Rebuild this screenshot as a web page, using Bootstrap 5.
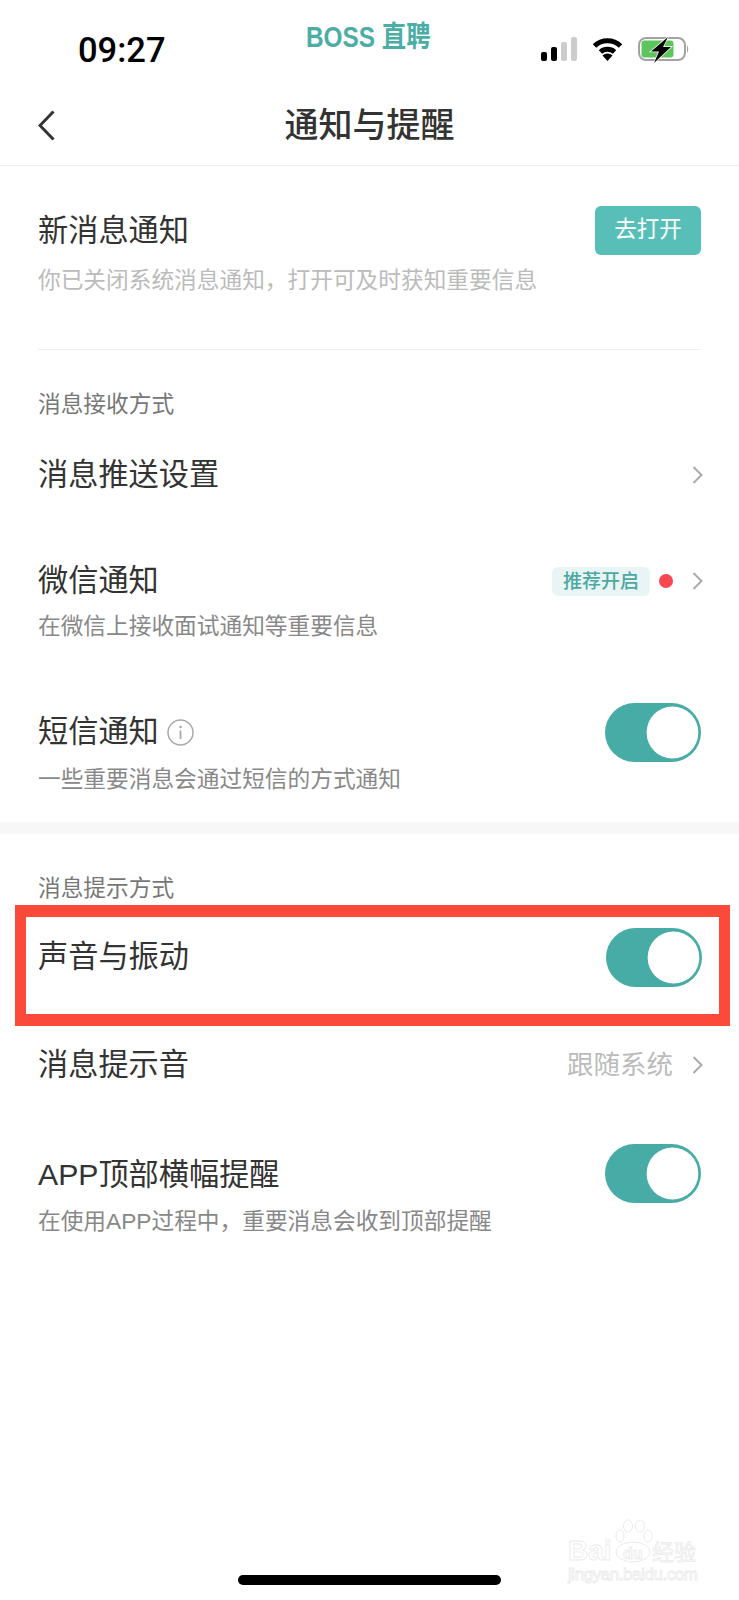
<!DOCTYPE html>
<html lang="zh-CN">
<head>
    <meta charset="UTF-8">
    <meta name="viewport" content="width=device-width, initial-scale=1.0">
    <title>通知与提醒</title>
    <link rel="stylesheet" href="https://cdn.jsdelivr.net/npm/bootstrap@5.3.0/dist/css/bootstrap.min.css">
    <style>
        body {
            width: 739px;
            height: 1600px;
            overflow: hidden;
            position: relative;
            background: #fff;
            font-family: "Liberation Sans", "Noto Sans CJK SC", sans-serif;
            color: #333;
        }
        .status-top { height: 90px; }
        .clock {
            width: 306px;
            padding: 34px 0 0 78px;
            font: 500 34.500px/32px Roboto, "Liberation Sans", sans-serif;
            color: #000;
        }
        .brand {
            width: 235px;
            padding-top: 21px;
            font-size: 29px;
            line-height: 32px;
            font-weight: 700;
            color: #4cada6;
            white-space: nowrap;
        }
        .brand span { display: inline-block; transform: scaleX(.84); transform-origin: left center; }
        .status-icons { padding-top: 37px; gap: 15px; }
        .sig-bar { width: 6px; border-radius: 2px; background: #000; }
        .sig-off { background: #ccc; }
        .sig-wrap { gap: 4px; height: 24px; }
        .top-nav {
            height: 76px;
            padding: 0 38px 6px;
            border-bottom: 1px solid #eee;
        }
        .top-nav h1 {
            font-size: 34px;
            line-height: 40px;
            font-weight: 500;
            color: #333;
            margin: 0;
        }
        .back-btn { left: 38px; top: 20px; }
        .head-line {
            height: 40px;
            font-size: 30.200px;
            line-height: 40px;
            color: #333;
        }
        .sub-text {
            font-size: 22.700px;
            line-height: 30px;
            color: #888;
        }
        .sub-pale { color: #bbb; }
        .group-label {
            font-size: 22.700px;
            line-height: 30px;
            color: #777;
        }
        .sec-first { padding-top: 45px; }
        .sec-rule { height: 1px; background: #eee; margin: 54px 38px 0; }
        .open-btn {
            width: 106px;
            height: 49px;
            margin: -6px 0 -4px;
            padding: 0;
            border: 0;
            border-radius: 6px;
            background: #58bfb8;
            color: #fff;
            font-size: 22.500px;
        }
        .open-btn:hover { background: #58bfb8; color: #fff; }
        .form-switch .form-check-input.tgl {
            width: 96px;
            height: 59px;
            margin: -10px 0;
            float: none;
            border: 0;
            border-radius: 30px;
            background-color: #47aca6;
            /* bootstrap's thumb svg fills 3/4 of the tile */
            background-size: 69.500px 69.500px;
            background-position: 32.500px center;
        }
        .form-switch .form-check-input.tgl-up { margin: -12px 0 -8px; }
        .tgl-wrap { min-height: 0; }
        .rec-tag {
            width: 98px;
            height: 29px;
            border-radius: 6px;
            background: #e8f5f4;
            color: #4ea8a2;
            font-size: 19px;
            line-height: 29px;
            font-weight: 500;
        }
        .red-dot { width: 14px; height: 14px; background: #f9474f; margin: 0 19px 0 9px; }
        .follow-sys { font-size: 26.500px; color: #bbb; margin-right: 19px; }
        .chev-r { margin-right: -2px; }
        .grey-band { height: 12px; background: #f7f7f7; margin-top: 28px; }
        .red-box {
            margin: 2px 9px 0 15px;
            border: solid #fb4a3a;
            border-width: 12px 11px;
            padding: 20px 17px 37px 12px;
        }
        .home-bar {
            width: 263px;
            height: 10px;
            margin: 339px auto 0;
            border-radius: 5px;
            background: #000;
        }
        .wm-mark { left: 566px; top: 1518px; }
        .wm-mark text {
            font-family: "Liberation Sans", "Noto Sans CJK SC", sans-serif;
            fill: #fff;
            stroke: #ebebeb;
            stroke-width: .8;
        }
        .mt-36 { margin-top: 36px; }
        .mt-39 { margin-top: 39px; }
        .mt-66 { margin-top: 66px; }
        .mt-70 { margin-top: 70px; }
        .mt-71 { margin-top: 71px; }
        .mt-19 { margin-top: 19px; }
        .mt-10 { margin-top: 10px; }
        .mt-11 { margin-top: 11px; }
        .mt-12 { margin-top: 12px; }
        .mt-14 { margin-top: 14px; }
        .px-side { padding-left: 38px; padding-right: 38px; }
    </style>
</head>
<body>
    <div class="status-top d-flex">
        <div class="clock">09:27</div>
        <div class="brand"><span>BOSS 直聘</span></div>
        <div class="status-icons d-flex align-items-start">
            <div class="sig-wrap d-flex align-items-end">
                <div class="sig-bar" style="height: 9px"></div>
                <div class="sig-bar" style="height: 14px"></div>
                <div class="sig-bar sig-off" style="height: 19px"></div>
                <div class="sig-bar sig-off" style="height: 24px"></div>
            </div>
            <svg width="31" height="24" viewBox="0 0 31 24">
                <path d="M2.500 9 A19 19 0 0 1 28.500 9" fill="none" stroke="#000" stroke-width="5"/>
                <path d="M8.500 15 A10.500 10.500 0 0 1 22.500 15" fill="none" stroke="#000" stroke-width="5"/>
                <path d="M15.500 24 L10.500 18.500 A7 7 0 0 1 20.500 18.500 Z" fill="#000"/>
            </svg>
            <svg width="52" height="26" viewBox="0 0 52 26">
                <rect x="1" y="1" width="46" height="22" rx="7" fill="none" stroke="#a3a3a3" stroke-width="2"/>
                <rect x="3.500" y="3.500" width="32" height="17" rx="3" fill="#5cc65c"/>
                <path d="M49 8 Q51.500 12 49 16 Z" fill="#a3a3a3"/>
                <path d="M30 0 L13 14.500 L21 14.500 L16 26 L33 10 L25 10 Z" fill="#000" stroke="#fff" stroke-width="1.500" paint-order="stroke"/>
            </svg>
        </div>
    </div>

    <div class="top-nav position-relative d-flex align-items-center justify-content-center">
        <svg class="back-btn position-absolute" width="17" height="31" viewBox="0 0 17 31">
            <path d="M15.500 1.500 L2 15.500 L15.500 29.500" fill="none" stroke="#333" stroke-width="3"/>
        </svg>
        <h1>通知与提醒</h1>
    </div>

    <div class="sec-first px-side">
        <div class="head-line d-flex align-items-center justify-content-between">
            <span>新消息通知</span>
            <button type="button" class="btn open-btn">去打开</button>
        </div>
        <div class="sub-text sub-pale mt-14">你已关闭系统消息通知&#65292;打开可及时获知重要信息</div>
    </div>
    <div class="sec-rule"></div>

    <div class="px-side">
        <div class="group-label mt-39">消息接收方式</div>

        <div class="head-line mt-36 d-flex align-items-center justify-content-between">
            <span>消息推送设置</span>
            <svg class="chev-r" width="11" height="18" viewBox="0 0 11 18"><path d="M1.500 1 L9.500 9 L1.500 17" fill="none" stroke="#aaa" stroke-width="2"/></svg>
        </div>

        <div class="head-line mt-66 d-flex align-items-center">
            <span class="me-auto">微信通知</span>
            <span class="rec-tag text-center">推荐开启</span>
            <span class="red-dot rounded-circle"></span>
            <svg class="chev-r" width="11" height="18" viewBox="0 0 11 18"><path d="M1.500 1 L9.500 9 L1.500 17" fill="none" stroke="#aaa" stroke-width="2"/></svg>
        </div>
        <div class="sub-text mt-10">在微信上接收面试通知等重要信息</div>

        <div class="head-line mt-71 d-flex align-items-center">
            <span>短信通知</span>
            <svg class="ms-2 me-auto" width="27" height="27" viewBox="0 0 27 27">
                <circle cx="13.500" cy="13.500" r="12.500" fill="none" stroke="#aaa" stroke-width="1.500"/>
                <circle cx="13.500" cy="8" r="1.300" fill="#aaa"/>
                <path d="M13.500 11.500 V20" stroke="#aaa" stroke-width="1.800"/>
            </svg>
            <div class="form-check form-switch tgl-wrap p-0 m-0 d-flex">
                <input class="form-check-input tgl" type="checkbox" role="switch" checked>
            </div>
        </div>
        <div class="sub-text mt-12">一些重要消息会通过短信的方式通知</div>
    </div>

    <div class="grey-band"></div>

    <div class="px-side">
        <div class="group-label mt-39">消息提示方式</div>
    </div>

    <div class="red-box">
        <div class="head-line d-flex align-items-center justify-content-between">
            <span>声音与振动</span>
            <div class="form-check form-switch tgl-wrap p-0 m-0 d-flex">
                <input class="form-check-input tgl" type="checkbox" role="switch" checked>
            </div>
        </div>
    </div>

    <div class="px-side">
        <div class="head-line mt-19 d-flex align-items-center">
            <span class="me-auto">消息提示音</span>
            <span class="follow-sys">跟随系统</span>
            <svg class="chev-r" width="11" height="18" viewBox="0 0 11 18"><path d="M1.500 1 L9.500 9 L1.500 17" fill="none" stroke="#aaa" stroke-width="2"/></svg>
        </div>

        <div class="head-line mt-70 d-flex align-items-center justify-content-between">
            <span>APP顶部横幅提醒</span>
            <div class="form-check form-switch tgl-wrap p-0 m-0 d-flex">
                <input class="form-check-input tgl tgl-up" type="checkbox" role="switch" checked>
            </div>
        </div>
        <div class="sub-text mt-11">在使用APP过程中&#65292;重要消息会收到顶部提醒</div>
    </div>

    <div class="home-bar"></div>

    <svg class="wm-mark position-absolute" width="136" height="68" viewBox="0 0 136 68">
        <text x="2" y="42" font-size="28" font-weight="700">Bai</text>
        <ellipse cx="67" cy="34" rx="17" ry="10" fill="none" stroke="#ebebeb"/>
        <ellipse cx="54" cy="18" rx="4" ry="6" fill="none" stroke="#ebebeb"/>
        <ellipse cx="62" cy="8" rx="4.500" ry="6" fill="none" stroke="#ebebeb"/>
        <ellipse cx="74" cy="8" rx="4.500" ry="6" fill="none" stroke="#ebebeb"/>
        <ellipse cx="82" cy="18" rx="4" ry="6" fill="none" stroke="#ebebeb"/>
        <text x="57" y="41" font-size="16" font-weight="700">du</text>
        <text x="86" y="42" font-size="22">经验</text>
        <text x="2" y="62" font-size="17" textLength="130">jingyan.baidu.com</text>
    </svg>

    <script src="https://cdn.jsdelivr.net/npm/bootstrap@5.3.0/dist/js/bootstrap.bundle.min.js"></script>
</body>
</html>
